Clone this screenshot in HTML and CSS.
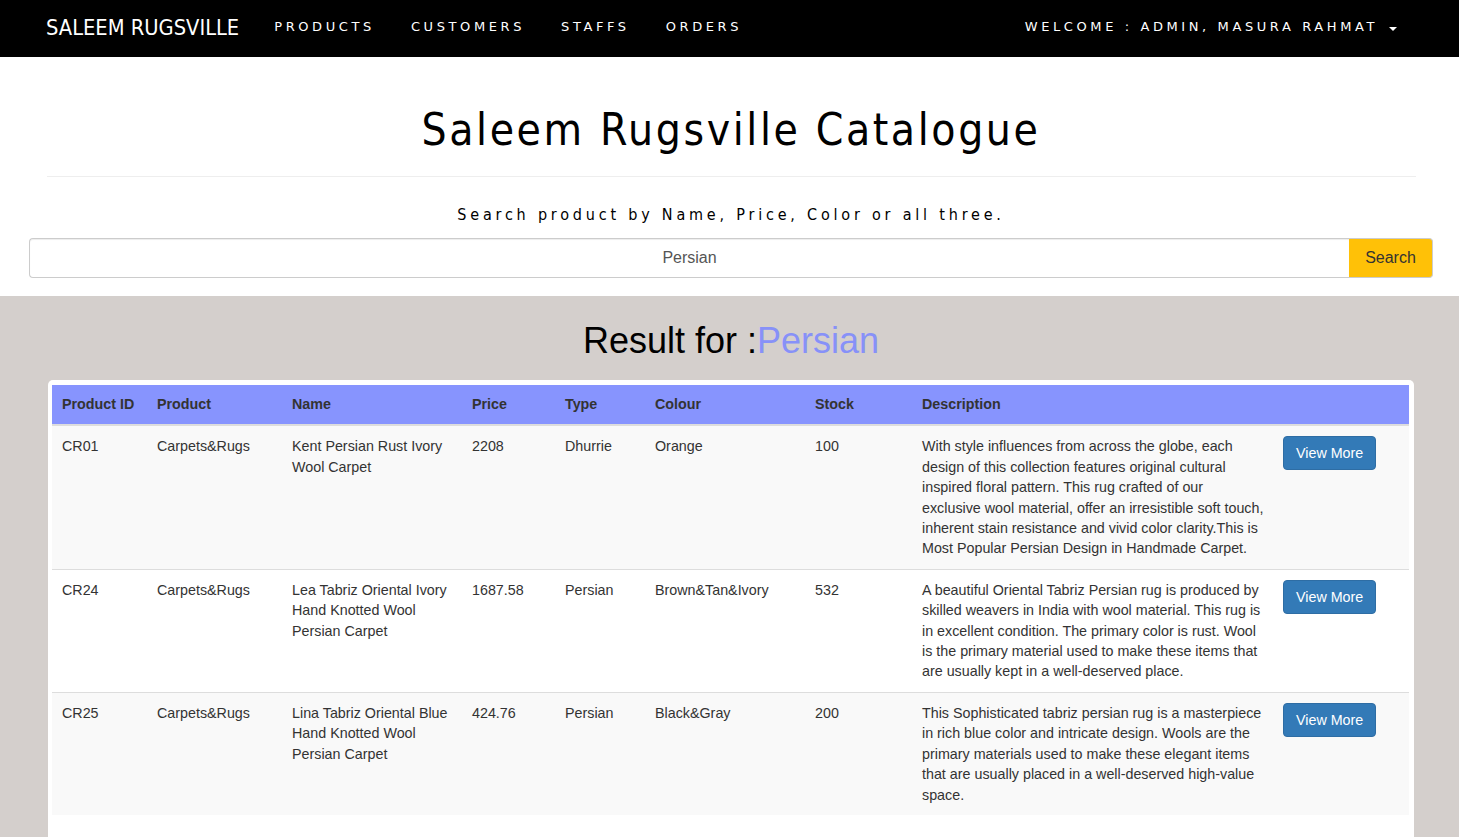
FILE: index.html
```html
<!DOCTYPE html>
<html>
<head>
<meta charset="utf-8">
<title>Saleem Rugsville Catalogue</title>
<link rel="stylesheet" href="styles.css">
</head>
<body>
<nav class="navbar">
  <div class="nav-left">
    <a class="brand" href="#">SALEEM RUGSVILLE</a>
    <ul class="nav-links">
      <li><a href="#">PRODUCTS</a></li>
      <li><a href="#">CUSTOMERS</a></li>
      <li><a href="#">STAFFS</a></li>
      <li><a href="#">ORDERS</a></li>
    </ul>
  </div>
  <div class="nav-right">
    <a href="#" class="user">WELCOME : ADMIN, MASURA RAHMAT</a><span class="caret"></span>
  </div>
</nav>

<header class="top">
  <h1 class="title">Saleem Rugsville Catalogue</h1>
  <hr class="rule">
  <p class="subtitle">Search product by Name, Price, Color or all three.</p>
  <form class="search">
    <input class="search-input" type="text" value="Persian">
    <button class="search-btn" type="button">Search</button>
  </form>
</header>

<main class="results">
  <h2 class="result-title">Result for :<span class="term">Persian</span></h2>
  <div class="panel">
    <table class="table">
      <colgroup>
        <col class="c1"><col class="c2"><col class="c3"><col class="c4"><col class="c5"><col class="c6"><col class="c7"><col class="c8"><col class="c9">
      </colgroup>
      <thead>
        <tr>
          <th>Product ID</th><th>Product</th><th>Name</th><th>Price</th><th>Type</th><th>Colour</th><th>Stock</th><th>Description</th><th></th>
        </tr>
      </thead>
      <tbody>
        <tr class="odd">
          <td>CR01</td><td>Carpets&amp;Rugs</td><td>Kent Persian Rust Ivory Wool Carpet</td><td>2208</td><td>Dhurrie</td><td>Orange</td><td>100</td>
          <td class="desc">With style influences from across the globe, each design of this collection features original cultural inspired floral pattern. This rug crafted of our exclusive wool material, offer an irresistible soft touch, inherent stain resistance and vivid color clarity.This is Most Popular Persian Design in Handmade Carpet.</td>
          <td><a class="btn" href="#">View More</a></td>
        </tr>
        <tr>
          <td>CR24</td><td>Carpets&amp;Rugs</td><td>Lea Tabriz Oriental Ivory Hand Knotted Wool Persian Carpet</td><td>1687.58</td><td>Persian</td><td>Brown&amp;Tan&amp;Ivory</td><td>532</td>
          <td class="desc">A beautiful Oriental Tabriz Persian rug is produced by skilled weavers in India with wool material. This rug is in excellent condition. The primary color is rust. Wool is the primary material used to make these items that are usually kept in a well-deserved place.</td>
          <td><a class="btn" href="#">View More</a></td>
        </tr>
        <tr class="odd">
          <td>CR25</td><td>Carpets&amp;Rugs</td><td>Lina Tabriz Oriental Blue Hand Knotted Wool Persian Carpet</td><td>424.76</td><td>Persian</td><td>Black&amp;Gray</td><td>200</td>
          <td class="desc">This Sophisticated tabriz persian rug is a masterpiece in rich blue color and intricate design. Wools are the primary materials used to make these elegant items that are usually placed in a well-deserved high-value space.</td>
          <td><a class="btn" href="#">View More</a></td>
        </tr>
      </tbody>
    </table>
  </div>
</main>
</body>
</html>
```

FILE: styles.css
```css
* { box-sizing: border-box; }
html, body { margin: 0; padding: 0; }
body {
  font-family: "Liberation Sans", Arial, sans-serif;
  font-size: 14.3px;
  line-height: 20.4px;
  color: #333;
  background: #d4cfcc;
}

/* navbar */
.navbar {
  height: 57px;
  background: #000;
  display: flex;
  align-items: center;
  justify-content: space-between;
  padding: 0 62px 0 46px;
}
.nav-left { display: flex; align-items: center; }
.brand {
  font-family: "DejaVu Sans Condensed", "DejaVu Sans", sans-serif;
  font-size: 21.7px;
  color: #fff;
  text-decoration: none;
  letter-spacing: 0;
  margin-right: 17px;
}
.nav-links { list-style: none; margin: 0; padding: 0; display: flex; }
.nav-links a, .user {
  display: block;
  font-family: "DejaVu Sans", Verdana, sans-serif;
  font-size: 13px;
  letter-spacing: 3.6px;
  color: #fff;
  text-decoration: none;
  padding: 0 18px;
  position: relative;
  top: -1px;
}
.nav-right { display: flex; align-items: center; }
.user { padding: 0; left: -2px; }
.caret {
  display: inline-block;
  width: 0; height: 0;
  margin-left: 9px;
  border-top: 4px solid #fff;
  border-left: 4px solid transparent;
  border-right: 4px solid transparent;
}

/* header */
.top {
  background: #fff;
  padding: 44px 26px 18px 29px;
  text-align: center;
}
.title {
  margin: 0;
  font-family: "DejaVu Sans Condensed", "DejaVu Sans", sans-serif;
  font-weight: normal;
  font-size: 44px;
  line-height: 58px;
  letter-spacing: 2.6px;
  color: #000;
}
.rule {
  border: 0;
  border-top: 1px solid #eee;
  margin: 17px 17px 0 18px;
}
.subtitle {
  margin: 27px 0 12px;
  font-family: "DejaVu Sans Condensed", "DejaVu Sans", sans-serif;
  font-size: 16px;
  line-height: 22px;
  letter-spacing: 3.8px;
  color: #000;
}
.search { display: flex; }
.search-input {
  flex: 1;
  height: 40px;
  border: 1px solid #ccc;
  border-right: 0;
  border-radius: 4px 0 0 4px;
  font-family: "Liberation Sans", Arial, sans-serif;
  font-size: 16px;
  color: #555;
  text-align: center;
  padding: 6px 12px;
  box-shadow: inset 0 1px 1px rgba(0,0,0,.075);
}
.search-btn {
  width: 84px;
  height: 40px;
  border: 1px solid #ccc;
  border-left: 0;
  border-radius: 0 4px 4px 0;
  background: #ffc107;
  font-family: "Liberation Sans", Arial, sans-serif;
  font-size: 16px;
  color: #333;
}

/* results */
.results { padding: 24px 45px 0 48px; }
.result-title {
  margin: 0 0 18px;
  text-align: center;
  font-family: "Liberation Sans", Arial, sans-serif;
  font-weight: normal;
  font-size: 36px;
  line-height: 42px;
  color: #000;
}
.term { color: #8791f8; }
.panel {
  background: #fff;
  border-radius: 5px 5px 0 0;
  padding: 5px 5px 30px 4px;
}
.table {
  width: 100%;
  border-collapse: collapse;
  table-layout: fixed;
}
.c1 { width: 95px; } .c2 { width: 135px; } .c3 { width: 180px; }
.c4 { width: 93px; } .c5 { width: 90px; } .c6 { width: 160px; }
.c7 { width: 107px; } .c8 { width: 361px; } .c9 { width: 136px; }
.table th {
  background: #8794fe;
  text-align: left;
  font-weight: bold;
  padding: 9px 10px 10px;
  border-bottom: 2px solid #ddd;
}
.table td {
  vertical-align: top;
  padding: 10px 10px;
  border-top: 1px solid #ddd;
}
.table td.desc { padding-right: 8px; }
.table tbody tr:first-child td { border-top: 0; }
.table tr.odd td { background: #f9f9f9; }
.btn {
  display: inline-block;
  background: #337ab7;
  border: 1px solid #2e6da4;
  border-radius: 4px;
  color: #fff;
  text-decoration: none;
  padding: 6px 12px;
  line-height: 20px;
  font-size: 14.3px;
}
```
